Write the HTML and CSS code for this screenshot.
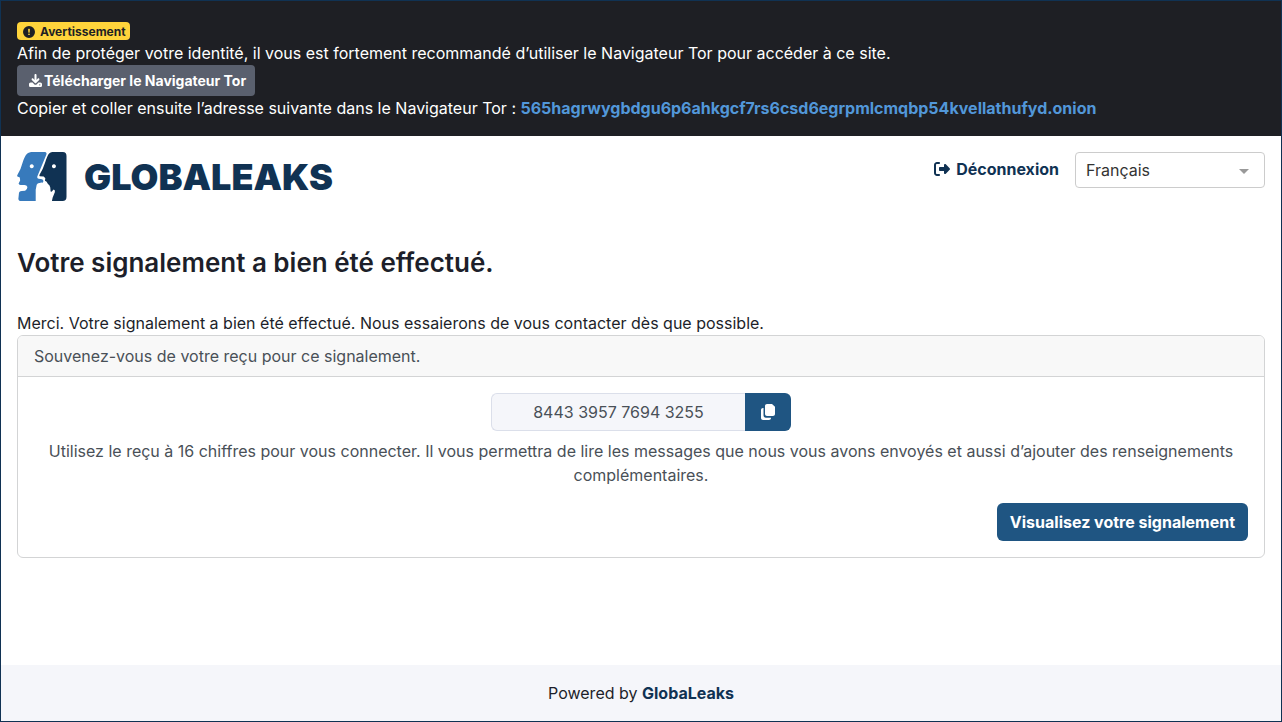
FILE: index.html
```html
<!DOCTYPE html>
<html lang="fr">
<head>
<meta charset="utf-8">
<meta name="viewport" content="width=device-width, initial-scale=1">
<title>GlobaLeaks</title>
<link rel="stylesheet" href="styles.css">
</head>
<body>
<div class="page">
  <aside class="tor-notice">
    <div class="notice-row">
      <span class="badge">
        <svg class="icon" viewBox="0 0 512 512" aria-hidden="true"><path d="M256 512A256 256 0 1 0 256 0a256 256 0 1 0 0 512zm0-400c22 0 40 14 38 36L284 264c-1 14-12 24-28 24s-27-10-28-24L218 148c-2-22 16-36 38-36zM220 352a36 36 0 1 1 72 0 36 36 0 1 1 -72 0z"/></svg>
        <span>Avertissement</span>
      </span>
    </div>
    <div>Afin de protéger votre identité, il vous est fortement recommandé d’utiliser le Navigateur Tor pour accéder à ce site.</div>
    <a class="btn btn-small" href="#tor">
      <svg class="icon" viewBox="0 0 512 512" aria-hidden="true"><path d="M296 40c0-22-18-40-40-40s-40 18-40 40V232l-50-50c-16-16-40-16-54 0s-14 38 0 54l118 118c14 14 38 14 52 0l118-118c14-16 14-38 0-54s-38-16-54 0l-50 50V40zM64 336c-35 0-64 29-64 64v48c0 35 29 64 64 64H448c35 0 64-29 64-64V400c0-35-29-64-64-64H372l-65 65c-28 28-74 28-102 0L140 336H64zm360 64a26 26 0 1 1 0 52 26 26 0 1 1 0-52z"/></svg>
      <span>Télécharger le Navigateur Tor</span>
    </a>
    <div>Copier et coller ensuite l’adresse suivante dans le Navigateur Tor : <a class="onion" href="#onion">565hagrwygbdgu6p6ahkgcf7rs6csd6egrpmlcmqbp54kvellathufyd.onion</a></div>
  </aside>

  <header class="topbar">
    <a class="logo" href="#home">
      <svg class="logo-mark" viewBox="0 0 150 148" aria-hidden="true">
        <path class="face-light" d="M42 0H82Q91 0 88 8L62 71Q58 80 65 81L75 82Q80 84 79 89L77 93Q72 91 68 94Q62 93 59 99L56 114V148H12Q2 148 4 138L5 128Q5 118 14 118L24 117Q31 113 31 106Q29 100 22 100L10 100Q3 99 5 94L9 86L8 77L1 74Q-1 72 1 69L10 51L16 33C22 14 28 2 42 0ZM44 37a6 6 0 1 0 .1 0Z"/>
        <path class="face-dark" d="M107 0H138Q149 0 149 12V136Q149 148 137 148H105L107 138L114 121Q115 113 110 113L104 120L101 119L100 107Q98 99 93 97L89 90L84 87L85 79L80 74L68 73Q66 71 68 68L77 51L85 30C92 10 95 1 107 0ZM111 37a6 6 0 1 0 .1 0Z"/>
      </svg>
      <span class="logo-text">GLOBALEAKS</span>
    </a>
    <nav class="actions">
      <a class="logout" href="#logout">
        <svg class="icon" viewBox="0 0 512 512" aria-hidden="true"><path d="M377.9 105.9L500.7 228.7c7.2 7.2 11.3 17.1 11.3 27.3s-4.1 20.1-11.3 27.3L377.9 406.1c-6.4 6.4-15 9.9-24 9.9c-18.7 0-33.9-15.2-33.9-33.9l0-62.1-128 0c-17.7 0-32-14.3-32-32l0-64c0-17.7 14.3-32 32-32l128 0 0-62.1c0-18.7 15.2-33.9 33.9-33.9c9 0 17.6 3.6 24 9.9zM160 96L96 96c-17.7 0-32 14.3-32 32l0 256c0 17.7 14.3 32 32 32l64 0c17.7 0 32 14.3 32 32s-14.3 32-32 32l-64 0c-53 0-96-43-96-96L0 128C0 75 43 32 96 32l64 0c17.7 0 32 14.3 32 32s-14.3 32-32 32z"/></svg>
        <span>Déconnexion</span>
      </a>
      <div class="language">
        <select class="language-select" aria-label="Langue">
          <option>Français</option>
        </select>
      </div>
    </nav>
  </header>

  <main class="content">
    <h1 class="title">Votre signalement a bien été effectué.</h1>
    <p class="thanks">Merci. Votre signalement a bien été effectué. Nous essaierons de vous contacter dès que possible.</p>
    <section class="card">
      <div class="card-header"><label for="receipt">Souvenez-vous de votre reçu pour ce signalement.</label></div>
      <div class="card-body">
        <div class="receipt">
          <input class="receipt-input" id="receipt" type="text" value="8443 3957 7694 3255" readonly>
          <button class="copy" type="button" aria-label="Copier">
            <svg class="icon" viewBox="0 0 448 512" aria-hidden="true"><path d="M192 0H352L448 84V320c0 35-29 64-64 64H192c-35 0-64-29-64-64V64c0-35 29-64 64-64zM64 128H80V360c0 44 28 76 76 76H320v12c0 35-29 64-64 64H64c-35 0-64-29-64-64V192c0-35 29-64 64-64z"/></svg>
          </button>
        </div>
        <p class="help">Utilisez le reçu à 16 chiffres pour vous connecter. Il vous permettra de lire les messages que nous vous avons envoyés et aussi d’ajouter des renseignements complémentaires.</p>
        <button class="btn btn-primary" type="button">Visualisez votre signalement</button>
      </div>
    </section>
  </main>

  <footer class="footer">Powered by <a class="footer-link" href="#globaleaks">GlobaLeaks</a></footer>
</div>
</body>
</html>
```
FILE: styles.css
```css
* {
  box-sizing: border-box;
}

body {
  margin: 0;
  font-family: Inter, "Liberation Sans", sans-serif;
  font-size: 16px;
  line-height: 24px;
  color: #1d1f2a;
  background: #fff;
}

a {
  text-decoration: none;
}

input,
select,
button {
  font: inherit;
}

.page {
  display: flex;
  flex-direction: column;
  min-height: 100vh;
  border: 1px solid #103253;
}

.icon {
  width: 16px;
  height: 16px;
  fill: currentColor;
  flex: none;
}

.tor-notice {
  padding: 16px;
  color: #fff;
  background: #1e1f24;
}

.notice-row {
  display: flex;
  align-items: flex-end;
  height: 24px;
  padding-bottom: 1px;
}

.badge {
  display: flex;
  align-items: center;
  gap: 5px;
  height: 18px;
  padding: 1px 4px 0 6px;
  border-radius: 4px;
  font-size: 12px;
  font-weight: 700;
  line-height: 18px;
  color: #1e1f24;
  background: #ffd43b;
}

.badge .icon {
  width: 12px;
  height: 12px;
}

.btn {
  display: inline-flex;
  align-items: center;
  border: 0;
  border-radius: 6px;
  padding: 7px 13px;
  font-weight: 700;
  color: #fff;
}

.btn-small {
  display: flex;
  width: fit-content;
  gap: 2px;
  padding: 5px 9px 5px 12px;
  border-radius: 4px;
  font-size: 14px;
  line-height: 21px;
  background: #5a606e;
}

.btn-small .icon {
  width: 13px;
  height: 13px;
}

.btn-primary {
  align-self: flex-end;
  background: #1f5582;
}

.onion {
  font-weight: 700;
  color: #5297d9;
}

.topbar {
  display: flex;
  justify-content: space-between;
  align-items: flex-start;
  padding: 16px;
}

.logo {
  display: flex;
  align-items: center;
  gap: 17px;
  color: #103253;
}

.logo-mark {
  width: 50px;
  height: 49px;
}

.face-light {
  fill: #377abc;
}

.face-dark {
  fill: #103253;
}

.logo-text {
  font-size: 36px;
  font-weight: 900;
  line-height: 48px;
}

.actions {
  display: flex;
  gap: 16px;
}

.logout {
  display: flex;
  align-items: center;
  gap: 6px;
  height: 34px;
  font-weight: 700;
  color: #103253;
}

.language {
  position: relative;
  width: 190px;
}

.language::after {
  content: "";
  position: absolute;
  top: 17px;
  right: 16px;
  border: 5px solid transparent;
  border-top-color: #999;
  border-bottom: 0;
  pointer-events: none;
}

.language-select {
  display: block;
  width: 100%;
  height: 36px;
  padding: 0 10px;
  border: 1px solid #ccc;
  border-radius: 4px;
  color: #333;
  background: #fff;
  appearance: none;
}

.content {
  flex: 1;
  padding: 30px 16px 16px;
}

.title {
  margin: 0 0 32px;
  font-size: 26px;
  font-weight: 600;
  line-height: 32px;
}

.thanks,
.help {
  margin: 0;
}

.card {
  border: 1px solid #d3d4d5;
  border-radius: 6px;
  color: #495057;
}

.card-header {
  padding: 8px 16px;
  border-bottom: 1px solid #d3d4d5;
  border-radius: 5px 5px 0 0;
  background: #f8f8f8;
}

.card-body {
  display: flex;
  flex-direction: column;
  padding: 16px;
}

.receipt {
  display: flex;
  align-self: center;
  width: 300px;
  height: 38px;
  margin-bottom: 8px;
}

.receipt-input {
  flex: 1;
  min-width: 0;
  border: 1px solid #dbdfea;
  border-right: 0;
  border-radius: 6px 0 0 6px;
  text-align: center;
  color: #495057;
  background: #f5f6fa;
}

.copy {
  display: flex;
  align-items: center;
  justify-content: center;
  width: 46px;
  padding: 0;
  border: 0;
  border-radius: 0 6px 6px 0;
  color: #fff;
  background: #1f5582;
}

.help {
  margin-bottom: 16px;
  text-align: center;
}

.footer {
  padding: 16px;
  text-align: center;
  background: #f5f6fa;
}

.footer-link {
  font-weight: 700;
  color: #103253;
}
```
